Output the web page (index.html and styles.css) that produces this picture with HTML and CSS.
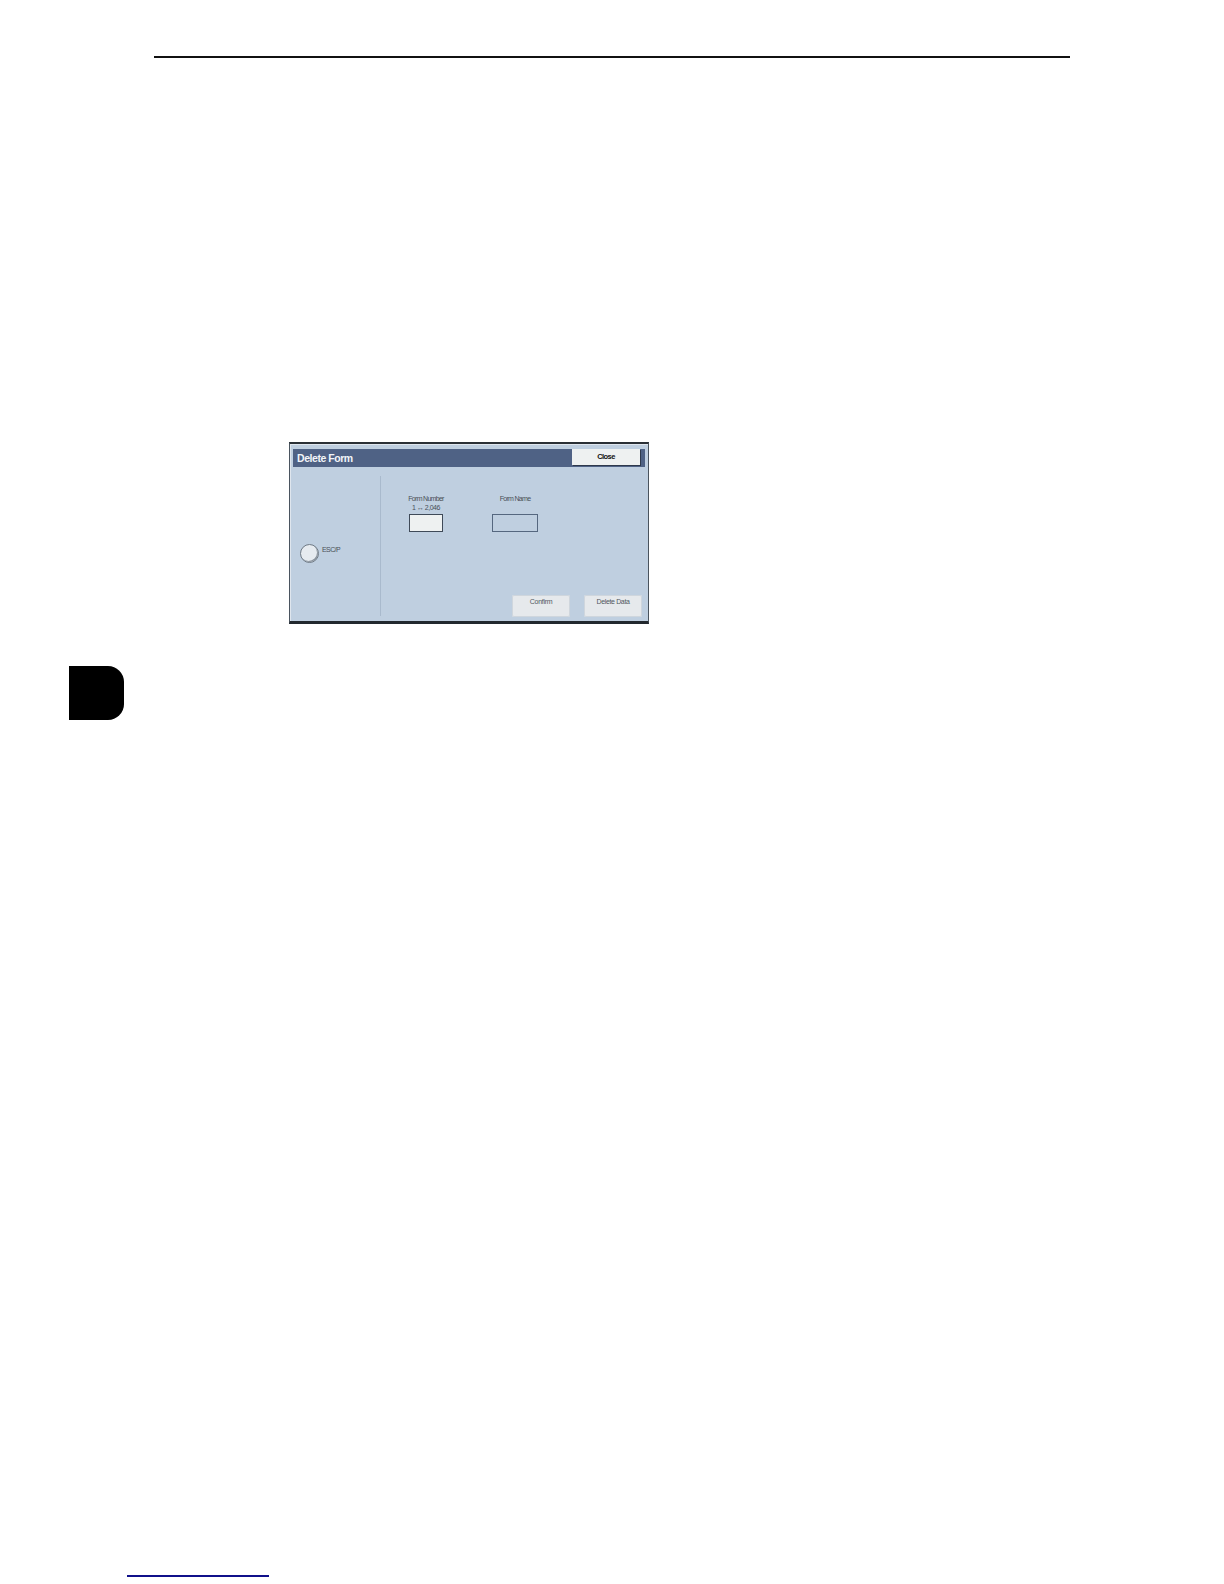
FILE: index.html
```html
<!DOCTYPE html>
<html lang="en">
<head>
  <meta charset="UTF-8">
  <title>Delete Form</title>
  <link rel="stylesheet" href="styles.css">
</head>
<body>
  <div class="page">
    <hr class="top-rule">

    <div class="figure-row">
      <div class="chapter-tab"></div>

      <!-- panel screenshot -->
      <div class="dialog">
        <div class="title-bar">
          <span class="title">Delete Form</span>
          <span class="close-btn">Close</span>
        </div>
        <div class="dialog-body">
          <div class="left-col">
            <div class="radio-row">
              <span class="radio"></span>
              <span class="radio-label">ESC/P</span>
            </div>
          </div>
          <div class="right-col">
            <div class="fields">
              <div class="field field-number">
                <div class="field-label">Form Number<br><span class="range">1 ↔ 2,046</span></div>
                <div class="input input-light"></div>
              </div>
              <div class="field field-name">
                <div class="field-label">Form Name</div>
                <div class="input input-blue"></div>
              </div>
            </div>
            <div class="actions">
              <span class="btn btn-confirm">Confirm</span>
              <span class="btn btn-delete">Delete Data</span>
            </div>
          </div>
        </div>
      </div>
    </div>

    <div class="bottom-link"></div>
  </div>
</body>
</html>
```

FILE: styles.css
```css
body {
  margin: 0;
  background: #ffffff;
  font-family: "Liberation Sans", Arial, sans-serif;
}

.page {
  height: 1584px;
  display: flex;
  flex-direction: column;
  overflow: hidden;
}

.top-rule {
  width: 916px;
  height: 2px;
  margin: 56px 0 0 154px;
  border: 0;
  background: #111111;
}

.figure-row {
  position: relative;
  padding: 384px 0 0 289px;
}

/* black thumb tab on the page edge */
.chapter-tab {
  position: absolute;
  left: 69px;
  top: 608px;
  width: 55px;
  height: 54px;
  background: #000000;
  border-radius: 0 16px 16px 0;
}

.dialog {
  width: 360px;
  height: 182px;
  box-sizing: border-box;
  background: #bfcfe0;
  border-style: solid;
  border-color: #2a3036 #4a545e #22282e #4a545e;
  border-width: 2px 1px 3px 1px;
  box-shadow: inset 1px 1px 0 #dfe6ee;
  display: flex;
  flex-direction: column;
}

.title-bar {
  height: 18px;
  margin: 5px 3px 0 3px;
  padding: 0 5px 0 4px;
  background: #4f6285;
  display: flex;
  align-items: flex-start;
  justify-content: space-between;
}

.title {
  color: #f2f5f8;
  font-size: 10.5px;
  font-weight: bold;
  line-height: 18px;
  letter-spacing: -0.45px;
}

.close-btn {
  width: 68px;
  height: 16px;
  background: #eef1f1;
  color: #111111;
  font-size: 7.5px;
  font-weight: bold;
  letter-spacing: -0.6px;
  text-align: center;
  line-height: 16px;
  box-shadow: 1px 1px 0 #2f3a4c;
}

.dialog-body {
  flex: 1;
  display: flex;
  padding-top: 9px;
  min-height: 0;
}

.left-col {
  width: 91px;
  box-sizing: border-box;
  margin-bottom: 5px;
  border-right: 1px solid #a9bacd;
}

.radio-row {
  display: flex;
  align-items: flex-start;
  margin: 68px 0 0 10px;
}

.radio {
  width: 17px;
  height: 17px;
  border-radius: 50%;
  background: #e6ebf0;
  border: 1px solid #6f7a85;
  box-shadow: inset -1px -1px 0 #8a949e;
}

.radio-label {
  margin: 2px 0 0 3px;
  font-size: 7px;
  letter-spacing: -0.6px;
  color: #4a5058;
}

.right-col {
  flex: 1;
  display: flex;
  flex-direction: column;
  justify-content: space-between;
  padding-bottom: 4px;
}

.fields {
  display: flex;
  padding-top: 18px;
}

.field {
  width: 50px;
  display: flex;
  flex-direction: column;
  align-items: center;
}

.field-label {
  height: 20px;
  font-size: 7px;
  line-height: 9px;
  letter-spacing: -0.7px;
  color: #4a5058;
  text-align: center;
  white-space: nowrap;
}

.range {
  letter-spacing: -0.5px;
}

.field-number {
  margin-left: 20px;
}

.field-name {
  margin-left: 39px;
}

.input {
  height: 18px;
  box-sizing: border-box;
  border: 1px solid #3f4a58;
}

.input-light {
  width: 34px;
  background: #eef1f1;
}

.input-blue {
  width: 46px;
  background: #bfcfe0;
  border-color: #55677f;
}

.actions {
  display: flex;
  justify-content: flex-end;
  gap: 14px;
  padding-right: 6px;
}

.btn {
  width: 58px;
  height: 22px;
  background: #e6e9ec;
  border-radius: 2px;
  color: #50585f;
  font-size: 7px;
  text-align: center;
  line-height: 13px;
  box-shadow: inset 0 0 0 1px #cfd6dd;
}

.btn-confirm {
  letter-spacing: -0.3px;
}

.btn-delete {
  letter-spacing: -0.35px;
}

.bottom-link {
  flex-shrink: 0;
  width: 142px;
  height: 2px;
  margin: auto 0 7px 127px;
  background: #10108a;
}
```
